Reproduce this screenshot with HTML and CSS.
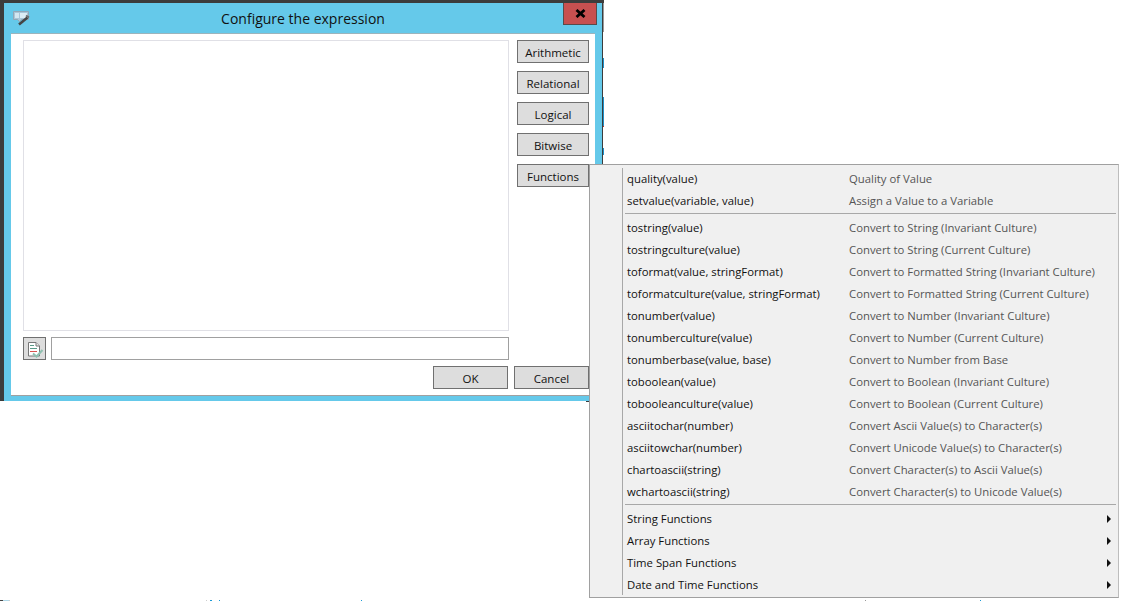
FILE: index.html
```html
<!DOCTYPE html>
<html lang="en">
<head>
<meta charset="utf-8">
<title>Configure the expression</title>
<link rel="stylesheet" href="styles.css">
</head>
<body>
<div class="peek-column"></div>
<div class="peek-row"></div>
<div class="peek-tick"></div>
<div class="window">
  <header class="titlebar">
    <svg class="app-icon" width="20" height="20" viewBox="0 0 20 20">
      <path d="M.5 1.500h15v8h-7l-2 2-2-2h-4z" fill="#a9c6d8" stroke="#93a7b6"/>
      <rect x="2" y="3" width="4" height="5" fill="#d4e7f1"/>
      <rect x="7" y="3" width="7" height="5" fill="#dcedf5"/>
      <path d="M6 14.500l8.500-7" stroke="#454545" stroke-width="2.600"/>
      <path d="M13 5.500l3 2" stroke="#6f6f6f" stroke-width="2"/>
    </svg>
    <h1 class="title">Configure the expression</h1>
    <button class="close" type="button"><svg width="11" height="9" viewBox="0 0 11 9"><path d="M1.500 1l8 7M9.500 1l-8 7" stroke="#000" stroke-width="2.800" fill="none"/></svg></button>
  </header>
  <div class="client">
    <div class="main">
      <div class="editor">
        <div class="expression"></div>
        <div class="input-row">
          <button class="check" type="button">
            <svg width="21" height="21" viewBox="0 0 21 21">
              <path d="M4.500 4.500h7.500l3.500 3.500v10h-11z" fill="#fff" stroke="#777"/>
              <path d="M12 4.500v3.500h3.500" fill="#e8e8e8" stroke="#777"/>
              <path d="M6 7.500h4M6 10.500h7" stroke="#5a9a88"/>
              <path d="M6 13.500h7" stroke="#d9534f"/>
              <path d="M9 15.500l3.500 3 6-6.500" stroke="#8fc0b0" stroke-width="2" fill="none"/>
            </svg>
          </button>
          <div class="field"></div>
        </div>
      </div>
      <div class="ops">
        <button class="btn" type="button">Arithmetic</button>
        <button class="btn" type="button">Relational</button>
        <button class="btn" type="button">Logical</button>
        <button class="btn" type="button">Bitwise</button>
        <button class="btn" type="button">Functions</button>
      </div>
    </div>
    <div class="actions">
      <button class="btn wide" type="button">OK</button>
      <button class="btn wide" type="button">Cancel</button>
    </div>
  </div>
</div>
<div class="menu">
  <div class="item"><span class="name">quality(value)</span><span class="desc">Quality of Value</span></div>
  <div class="item"><span class="name">setvalue(variable, value)</span><span class="desc">Assign a Value to a Variable</span></div>
  <div class="sep"></div>
  <div class="item"><span class="name">tostring(value)</span><span class="desc">Convert to String (Invariant Culture)</span></div>
  <div class="item"><span class="name">tostringculture(value)</span><span class="desc">Convert to String (Current Culture)</span></div>
  <div class="item"><span class="name">toformat(value, stringFormat)</span><span class="desc">Convert to Formatted String (Invariant Culture)</span></div>
  <div class="item"><span class="name">toformatculture(value, stringFormat)</span><span class="desc">Convert to Formatted String (Current Culture)</span></div>
  <div class="item"><span class="name">tonumber(value)</span><span class="desc">Convert to Number (Invariant Culture)</span></div>
  <div class="item"><span class="name">tonumberculture(value)</span><span class="desc">Convert to Number (Current Culture)</span></div>
  <div class="item"><span class="name">tonumberbase(value, base)</span><span class="desc">Convert to Number from Base</span></div>
  <div class="item"><span class="name">toboolean(value)</span><span class="desc">Convert to Boolean (Invariant Culture)</span></div>
  <div class="item"><span class="name">tobooleanculture(value)</span><span class="desc">Convert to Boolean (Current Culture)</span></div>
  <div class="item"><span class="name">asciitochar(number)</span><span class="desc">Convert Ascii Value(s) to Character(s)</span></div>
  <div class="item"><span class="name">asciitowchar(number)</span><span class="desc">Convert Unicode Value(s) to Character(s)</span></div>
  <div class="item"><span class="name">chartoascii(string)</span><span class="desc">Convert Character(s) to Ascii Value(s)</span></div>
  <div class="item"><span class="name">wchartoascii(string)</span><span class="desc">Convert Character(s) to Unicode Value(s)</span></div>
  <div class="sep"></div>
  <div class="item sub"><span class="name">String Functions</span><span class="arrow"></span></div>
  <div class="item sub"><span class="name">Array Functions</span><span class="arrow"></span></div>
  <div class="item sub"><span class="name">Time Span Functions</span><span class="arrow"></span></div>
  <div class="item sub"><span class="name">Date and Time Functions</span><span class="arrow"></span></div>
</div>
</body>
</html>
```
FILE: styles.css
```css
* { box-sizing: border-box; }
html, body { margin: 0; height: 100%; background: #fff; overflow: hidden; }
body { font-family: "Open Sans", "Noto Sans", sans-serif; font-size: 11.5px; color: #111; }
button { font: inherit; color: inherit; margin: 0; padding: 0; cursor: default; }

/* slivers of whatever sits behind the dialog */
.peek-column {
  position: absolute; left: 603px; top: 0; width: 1px; height: 164px;
  background: linear-gradient(to bottom,
    #3c3c3c 0 3px, #999 3px 32px, #fff 32px 58px, #1e90c8 58px 68px, #fff 68px 97px,
    #1e90c8 97px 126px, #b03030 126px 127px, #fff 127px 148px, #1e90c8 148px 155px, #fff 155px);
}
.peek-row {
  position: absolute; left: 0; top: 600px; width: 1122px; height: 1px;
  background: linear-gradient(to right,
    #444 0 3px, #b0d8e8 3px 9px, #ccc 9px 10px, #fff 10px 206px, #ccc 206px 207px, #fff 207px 210px,
    #1a9ad6 210px 212px, #fff 212px 219px, #1a9ad6 219px 220px, #fff 220px 361px, #1a9ad6 361px 362px,
    #fff 362px 865px, #999 865px 866px, #fff 866px 980px, #1a9ad6 980px 981px, #fff 981px);
}
.peek-tick { position: absolute; left: 586px; top: 401px; width: 3px; height: 1px; background: #3c3c3c; }

.window {
  position: absolute; left: 0; top: 0; width: 603px; height: 401px;
  background: #65c9ea;
  border-top: 3px solid #3c3c3c; border-left: 4px solid #3c3c3c; border-right: 1px solid #3c3c3c;
  padding: 0 7px 5px 7px;
  display: flex; flex-direction: column;
}
.titlebar { height: 30px; flex: none; display: flex; align-items: flex-start; position: relative; }
.app-icon { position: absolute; left: 2px; top: 7px; }
.title { flex: 1; margin: 0; text-align: center; font-size: 14px; font-weight: 400; line-height: 31px; color: #111; }
.close {
  position: absolute; right: -2px; top: 0; width: 34px; height: 22px;
  background: #c75050; border: 1px solid #5a4a4a; border-top: 0;
  display: flex; align-items: center; justify-content: center;
}

.client {
  flex: 1; background: #fff; border-top: 1px solid #9cb4bc; border-bottom: 1px solid #a0a0a0;
  padding: 6px 6px 6px 12px; display: flex; flex-direction: column;
}
.main { display: flex; gap: 8px; height: 320px; }
.editor { width: 486px; display: flex; flex-direction: column; }
.expression { height: 291px; border: 1px solid #e0e0e6; background: #fff; }
.input-row { display: flex; gap: 5px; margin-top: 6px; height: 23px; }
.check { width: 23px; height: 23px; background: #ddd; border: 1px solid #707070; display: flex; align-items: center; justify-content: center; }
.field { flex: 1; border: 1px solid #a0a0a0; background: #fff; }
.ops { width: 72px; display: flex; flex-direction: column; gap: 8px; }
.btn { height: 23px; background: #ddd; border: 1px solid #707070; text-align: center; padding-top: 2px; line-height: 20px; }
.actions { display: flex; justify-content: flex-end; gap: 6px; margin-top: 6px; }
.wide { width: 75px; }

.menu {
  position: absolute; left: 589px; top: 164px; width: 530px; height: 434px;
  background: #f0f0f0; border: 1px solid #a0a0a0; border-right-color: #bdbdbd;
  padding: 3px 2px 2px 2px; z-index: 2; font-size: 11.33px;
}
.menu::before { content: ""; position: absolute; left: 32px; top: 3px; bottom: 2px; width: 1px; background: #a8a8a8; }
.item { height: 22px; display: flex; align-items: center; padding: 0 0 2px 35px; position: relative; color: #111; }
.name { width: 222px; flex: none; white-space: nowrap; }
.desc { color: #555; white-space: nowrap; }
.sep { height: 1px; margin: 1px 0 3px 33px; background: #a8a8a8; }
.arrow { position: absolute; right: 5px; top: 7px; border-left: 4px solid #111; border-top: 4px solid transparent; border-bottom: 4px solid transparent; }
```
